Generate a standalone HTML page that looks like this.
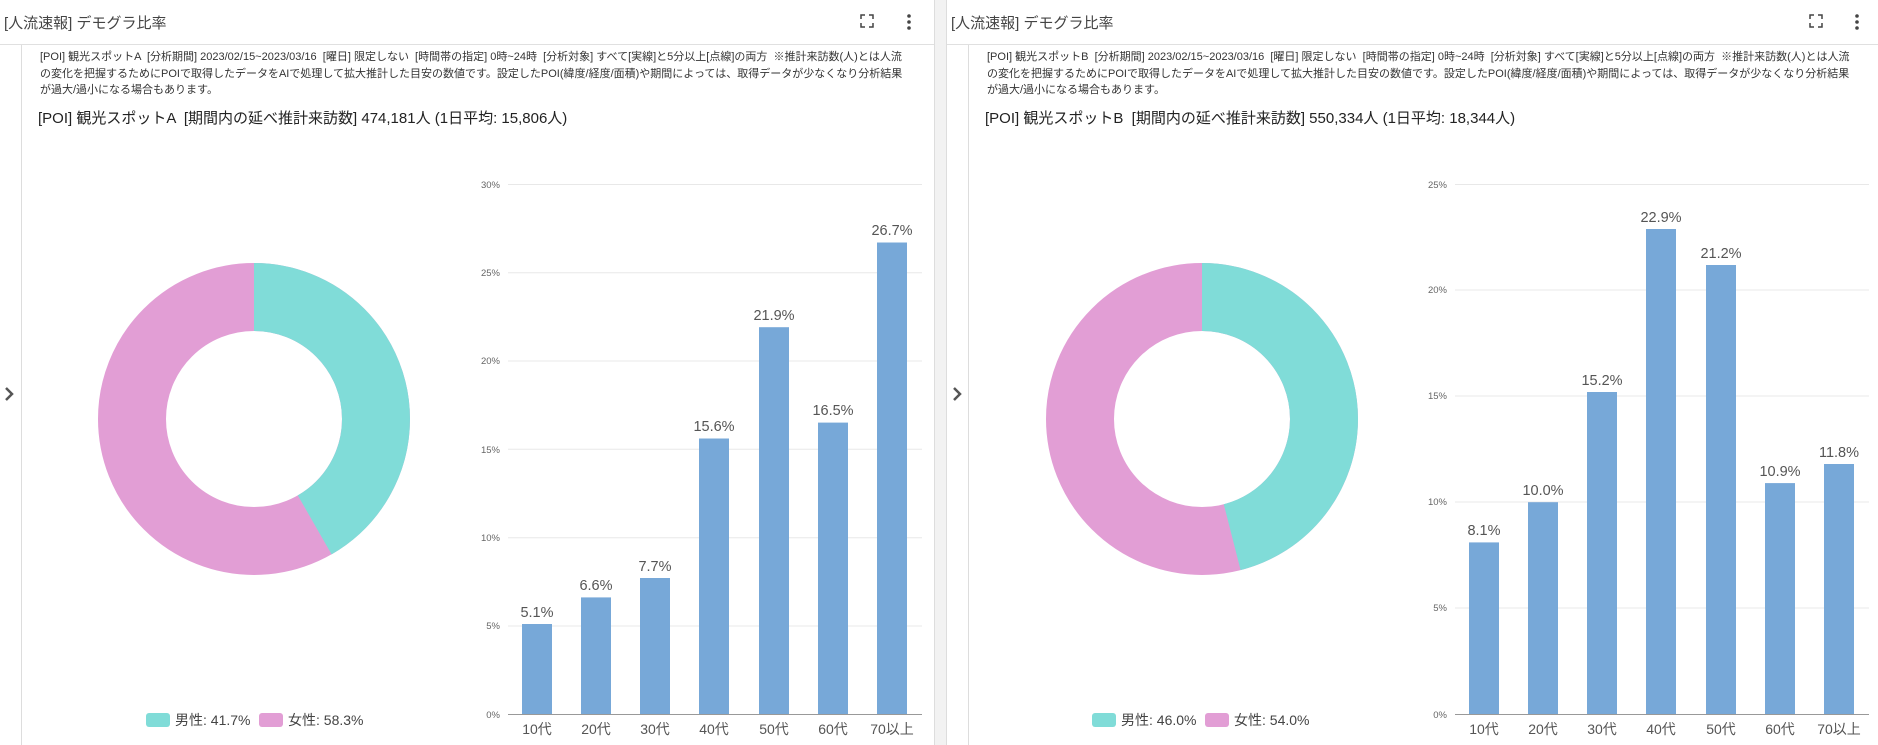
<!DOCTYPE html>
<html><head><meta charset="utf-8"><style>
body{margin:0;width:1878px;height:745px;background:#f2f2f2;overflow:hidden;font-family:"Liberation Sans","Noto Sans CJK JP",sans-serif;}
.p{position:absolute;top:0;height:745px;background:#fff;}
.hd{position:absolute;left:0;top:0;right:0;height:44px;border-bottom:1px solid #e0e0e0;}
.tt{position:absolute;left:4px;top:12px;font-size:15px;color:#444;}
.strip{position:absolute;left:0;top:45px;width:21px;bottom:0;border-right:1px solid #ddd;}
.desc{position:absolute;left:40px;top:49px;width:868px;font-size:11px;line-height:16.5px;color:#333;}
.h2{position:absolute;left:38px;top:107px;font-size:15px;color:#222;}
</style></head><body>
<div class="p" style="left:0;width:934px;border-right:1px solid #ddd">
<div class="hd"><div class="tt">[人流速報] デモグラ比率</div>
<svg style="position:absolute;left:860px;top:14px" width="14" height="14"><path d="M1 5V1H5M9 1H13V5M13 9V13H9M5 13H1V9" stroke="#444" stroke-width="1.5" fill="none"/></svg>
<svg style="position:absolute;left:906px;top:13px" width="6" height="18"><circle cx="3" cy="3" r="1.8" fill="#444"/><circle cx="3" cy="9" r="1.8" fill="#444"/><circle cx="3" cy="15" r="1.8" fill="#444"/></svg></div>
<div class="strip"><svg style="position:absolute;left:3px;top:340px" width="12" height="18"><path d="M3 3L9 9L3 15" stroke="#555" stroke-width="2.5" fill="none"/></svg></div>
<div class="desc">[POI] 観光スポットA &nbsp;[分析期間] 2023/02/15~2023/03/16 &nbsp;[曜日] 限定しない &nbsp;[時間帯の指定] 0時~24時 &nbsp;[分析対象] すべて[実線]と5分以上[点線]の両方 &nbsp;※推計来訪数(人)とは人流の変化を把握するためにPOIで取得したデータをAIで処理して拡大推計した目安の数値です。設定したPOI(緯度/経度/面積)や期間によっては、取得データが少なくなり分析結果が過大/過小になる場合もあります。</div>
<div class="h2">[POI] 観光スポットA &nbsp;[期間内の延べ推計来訪数] 474,181人 (1日平均: 15,806人)</div>
</div>
<div class="p" style="left:946px;width:932px;border-left:1px solid #ddd">
<div class="hd"><div class="tt">[人流速報] デモグラ比率</div>
<svg style="position:absolute;left:862px;top:14px" width="14" height="14"><path d="M1 5V1H5M9 1H13V5M13 9V13H9M5 13H1V9" stroke="#444" stroke-width="1.5" fill="none"/></svg>
<svg style="position:absolute;left:907px;top:13px" width="6" height="18"><circle cx="3" cy="3" r="1.8" fill="#444"/><circle cx="3" cy="9" r="1.8" fill="#444"/><circle cx="3" cy="15" r="1.8" fill="#444"/></svg></div>
<div class="strip"><svg style="position:absolute;left:4px;top:340px" width="12" height="18"><path d="M3 3L9 9L3 15" stroke="#555" stroke-width="2.5" fill="none"/></svg></div>
<div class="desc">[POI] 観光スポットB &nbsp;[分析期間] 2023/02/15~2023/03/16 &nbsp;[曜日] 限定しない &nbsp;[時間帯の指定] 0時~24時 &nbsp;[分析対象] すべて[実線]と5分以上[点線]の両方 &nbsp;※推計来訪数(人)とは人流の変化を把握するためにPOIで取得したデータをAIで処理して拡大推計した目安の数値です。設定したPOI(緯度/経度/面積)や期間によっては、取得データが少なくなり分析結果が過大/過小になる場合もあります。</div>
<div class="h2">[POI] 観光スポットB &nbsp;[期間内の延べ推計来訪数] 550,334人 (1日平均: 18,344人)</div>
</div>
<svg style="position:absolute;left:0;top:0" width="1878" height="745" font-family="Liberation Sans, Noto Sans CJK JP, sans-serif">
<g fill="none" stroke-width="68">
<circle cx="254" cy="419" r="122" stroke="#E29ED5"/>
<circle cx="254" cy="419" r="122" stroke="#80DCD8" stroke-dasharray="319.6 1000" transform="rotate(-90 254 419)"/>
<circle cx="1202" cy="419" r="122" stroke="#E29ED5"/>
<circle cx="1202" cy="419" r="122" stroke="#80DCD8" stroke-dasharray="352.6 1000" transform="rotate(-90 1202 419)"/>
</g>
<g font-size="14" fill="#444">
<rect x="146" y="713" width="24" height="14" rx="3" fill="#80DCD8"/><text x="175" y="725">男性: 41.7%</text>
<rect x="259" y="713" width="24" height="14" rx="3" fill="#E29ED5"/><text x="288" y="725">女性: 58.3%</text>
<rect x="1092" y="713" width="24" height="14" rx="3" fill="#80DCD8"/><text x="1121" y="725">男性: 46.0%</text>
<rect x="1205" y="713" width="24" height="14" rx="3" fill="#E29ED5"/><text x="1234" y="725">女性: 54.0%</text>
</g>
<g stroke="#e8e8e8" stroke-width="1">
<line x1="508" x2="922" y1="184.5" y2="184.5"/><line x1="508" x2="922" y1="272.8" y2="272.8"/><line x1="508" x2="922" y1="361" y2="361"/><line x1="508" x2="922" y1="449.3" y2="449.3"/><line x1="508" x2="922" y1="537.7" y2="537.7"/><line x1="508" x2="922" y1="626" y2="626"/>
<line x1="1455" x2="1869" y1="184.5" y2="184.5"/><line x1="1455" x2="1869" y1="290" y2="290"/><line x1="1455" x2="1869" y1="396" y2="396"/><line x1="1455" x2="1869" y1="502" y2="502"/><line x1="1455" x2="1869" y1="608" y2="608"/>
</g>
<line x1="508" x2="922" y1="714.5" y2="714.5" stroke="#999"/>
<line x1="1455" x2="1869" y1="714.5" y2="714.5" stroke="#999"/>
<g font-size="9.5" fill="#666" text-anchor="end">
<text x="500" y="188">30%</text><text x="500" y="276">25%</text><text x="500" y="364">20%</text><text x="500" y="453">15%</text><text x="500" y="541">10%</text><text x="500" y="629">5%</text><text x="500" y="718">0%</text>
<text x="1447" y="188">25%</text><text x="1447" y="293">20%</text><text x="1447" y="399">15%</text><text x="1447" y="505">10%</text><text x="1447" y="611">5%</text><text x="1447" y="718">0%</text>
</g>
<g fill="#77A8D8">
<rect x="522" y="624" width="30" height="90"/><rect x="581" y="597.4" width="30" height="116.6"/><rect x="640" y="578" width="30" height="136"/><rect x="699" y="438.5" width="30" height="275.5"/><rect x="759" y="327.2" width="30" height="386.8"/><rect x="818" y="422.6" width="30" height="291.4"/><rect x="877" y="242.5" width="30" height="471.5"/>
<rect x="1469" y="542.4" width="30" height="171.6"/><rect x="1528" y="502.2" width="30" height="211.8"/><rect x="1587" y="392" width="30" height="322"/><rect x="1646" y="229" width="30" height="485"/><rect x="1706" y="265" width="30" height="449"/><rect x="1765" y="483.1" width="30" height="230.9"/><rect x="1824" y="464" width="30" height="250"/>
</g>
<g font-size="14.5" fill="#555" text-anchor="middle">
<text x="537" y="617">5.1%</text><text x="596" y="590">6.6%</text><text x="655" y="571">7.7%</text><text x="714" y="431">15.6%</text><text x="774" y="320">21.9%</text><text x="833" y="415">16.5%</text><text x="892" y="235">26.7%</text>
<text x="1484" y="535">8.1%</text><text x="1543" y="495">10.0%</text><text x="1602" y="385">15.2%</text><text x="1661" y="222">22.9%</text><text x="1721" y="258">21.2%</text><text x="1780" y="476">10.9%</text><text x="1839" y="457">11.8%</text>
</g>
<g font-size="14" fill="#555" text-anchor="middle">
<text x="537" y="734">10代</text><text x="596" y="734">20代</text><text x="655" y="734">30代</text><text x="714" y="734">40代</text><text x="774" y="734">50代</text><text x="833" y="734">60代</text><text x="892" y="734">70以上</text>
<text x="1484" y="734">10代</text><text x="1543" y="734">20代</text><text x="1602" y="734">30代</text><text x="1661" y="734">40代</text><text x="1721" y="734">50代</text><text x="1780" y="734">60代</text><text x="1839" y="734">70以上</text>
</g>
</svg>
</body></html>
